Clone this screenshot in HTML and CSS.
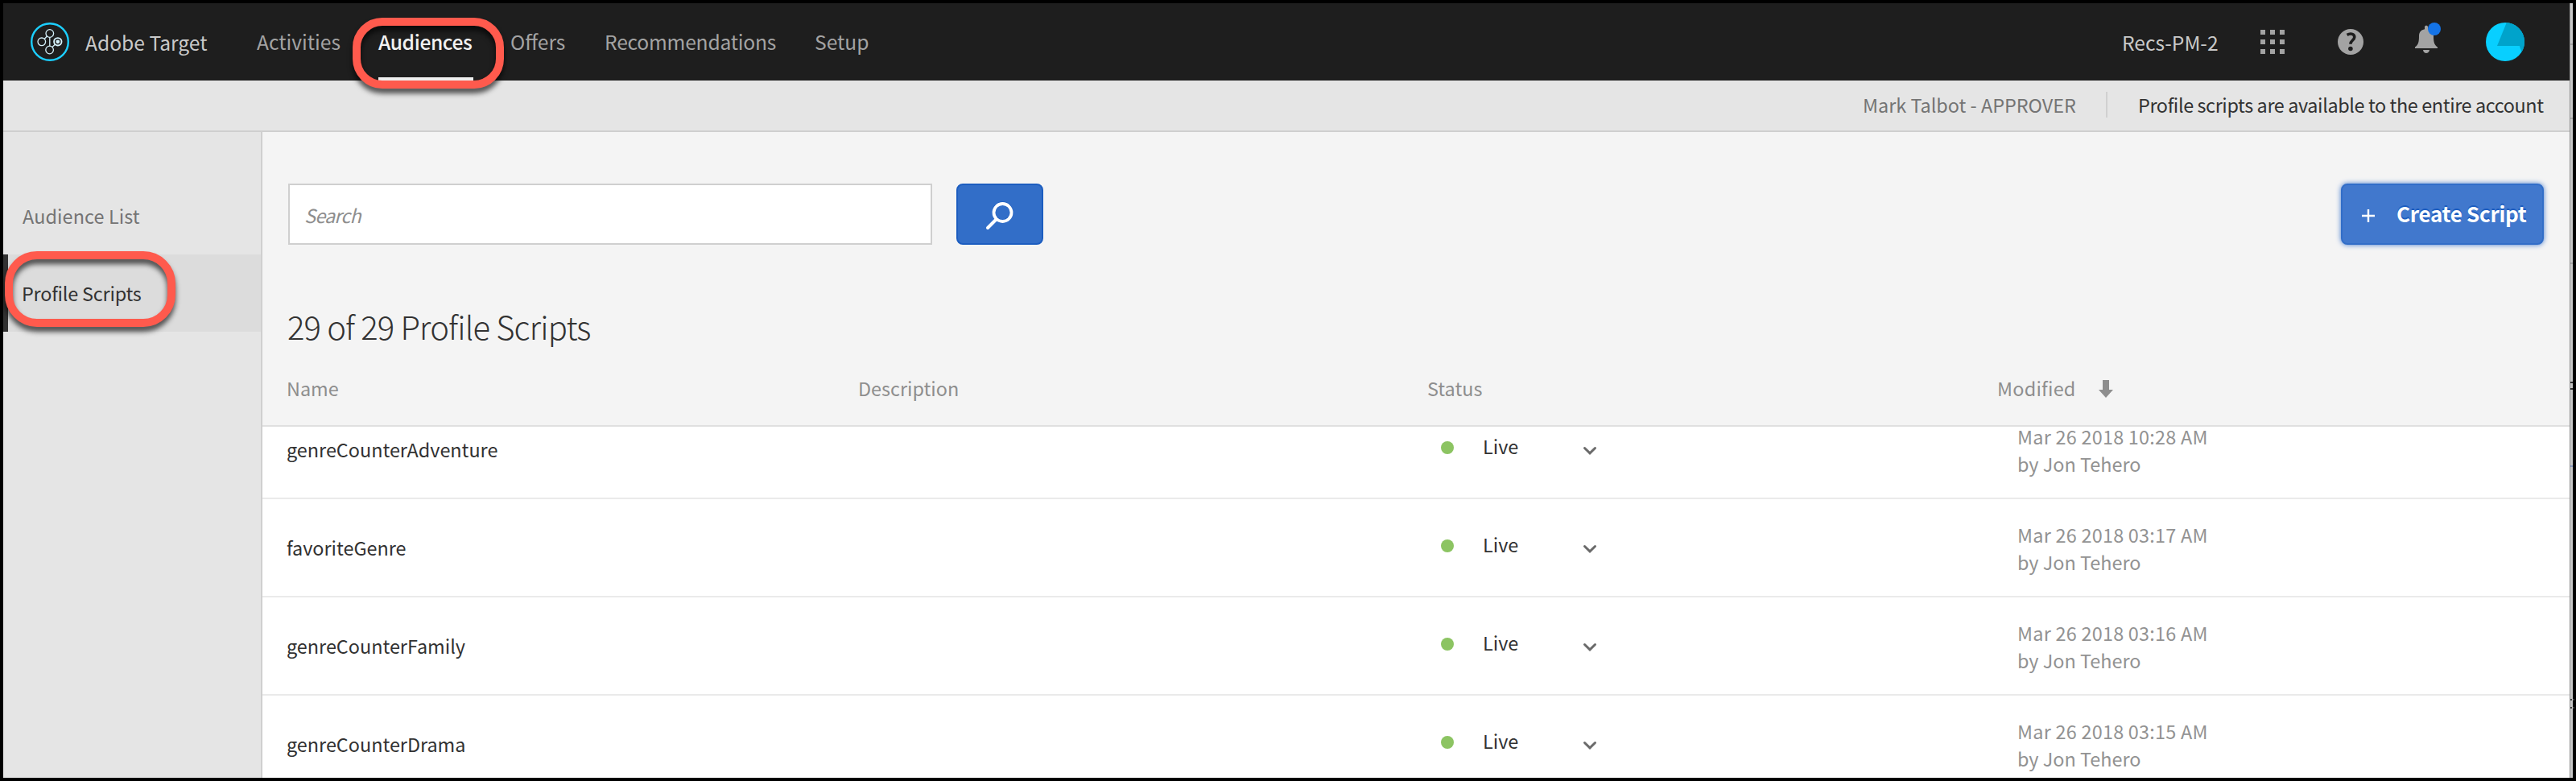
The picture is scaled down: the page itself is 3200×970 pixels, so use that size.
FILE: index.html
```html
<!DOCTYPE html>
<html lang="en">
<head>
<meta charset="utf-8">
<title>Adobe Target</title>
<link rel="stylesheet" href="styles.css">
</head>
<body>
<div class="window">
  <header class="topbar">
    <svg class="logo" viewBox="0 0 48 48" fill="none"><circle cx="24" cy="24" r="22.8" stroke="#1ccfff" stroke-width="2.4"/><g stroke="#d5f1fa" stroke-width="1.3"><circle cx="23.8" cy="13.5" r="4.8"/><circle cx="13.8" cy="23.8" r="4.8"/><circle cx="23.6" cy="34" r="4.8"/><circle cx="33.8" cy="23.8" r="4.7" stroke-width="1.9"/><path d="M17.100 20.500l3.500-3.700M26.900 30.500l3.700-3.400M23.800 18.200v11"/></g><circle cx="33.8" cy="23.8" r="2.4" fill="#d5f1fa"/></svg>
    <span class="brand">Adobe Target</span>
    <nav class="nav">
      <a class="tab activities">Activities</a>
      <a class="tab audiences">Audiences</a>
      <a class="tab offers">Offers</a>
      <a class="tab recs">Recommendations</a>
      <a class="tab setup">Setup</a>
    </nav>
    <div class="tools">
      <span class="org">Recs-PM-2</span>
      <svg class="apps" viewBox="0 0 30 30" fill="#a3a3a3"><path d="M0 0h6v6H0zM12 0h6v6h-6zM24 0h6v6h-6zM0 12h6v6H0zM12 12h6v6h-6zM24 12h6v6h-6zM0 24h6v6H0zM12 24h6v6h-6zM24 24h6v6h-6z"/></svg>
      <svg class="help" viewBox="0 0 32 32" fill="none"><circle cx="16" cy="16" r="16" fill="#a3a3a3"/><path d="M11.600 7.400c5-2.800 9.200-.8 9.200 2.600 0 4-4.900 4.100-4.900 8.700" stroke="#1e1e1e" stroke-width="3.600"/><circle cx="15.900" cy="24.500" r="2.800" fill="#1e1e1e"/></svg>
      <svg class="bell" viewBox="0 0 34 40"><path d="M12 5.500C12 3.200 16 3.200 16 5.500v2.700c4.500.8 7 3.800 7 8.500 0 7.500 1 11 5 13.800V32H0v-1.500c4-2.800 5-6.300 5-13.800 0-4.700 2.500-7.700 7-8.500zM10 34h8c-.5 5.300-7.500 5.300-8 0z" fill="#a3a3a3"/><circle cx="24" cy="8" r="8" fill="#1473e6"/></svg>
      <svg class="avatar" viewBox="0 0 48 48"><circle cx="24" cy="24" r="24" fill="#08cfff"/><path d="M25.800.1A24 24 0 0 1 44.500 36.500L41.800 29H14z" fill="#00a3cb"/></svg>
    </div>
  </header>
  <div class="infobar">
    <span class="user">Mark Talbot - APPROVER</span>
    <span class="note">Profile scripts are available to the entire account</span>
  </div>
  <div class="body">
    <aside class="side">
      <a class="side-item list">Audience List</a>
      <a class="side-item active">Profile Scripts</a>
    </aside>
    <main class="main">
      <div class="actions">
        <div class="search">Search</div>
        <div class="search-btn"><svg viewBox="0 0 36 36" fill="none" stroke-linecap="round"><g stroke="#1c5dc0" stroke-width="3.600"><circle cx="21.500" cy="13" r="11"/></g><g stroke="#fff"><circle cx="21.500" cy="14" r="11" stroke-width="3.800"/><path d="M13.500 22.500L3 33" stroke-width="4"/></g></svg></div>
        <div class="create"><svg viewBox="0 0 16 16"><path d="M8 0v16M0 8h16" stroke="#fff" stroke-width="2.400"/></svg><span>Create Script</span></div>
      </div>
      <h1 class="title">29 of 29 Profile Scripts</h1>
      <div class="cols head">
        <span>Name</span><span>Description</span><span>Status</span>
        <span class="sort">Modified<svg viewBox="0 0 18 22"><path d="M5 0h8v12h5l-9 10-9-10h5z" fill="#8e8e8e"/></svg></span>
      </div>
      <div class="rows">
        <div class="cols row first"><span class="name">genreCounterAdventure</span><span></span><span class="status"><i class="dot"></i><b>Live</b><svg viewBox="0 0 16 10"><path d="M1.500 1.500L8 7.800l6.500-6.300"/></svg></span><span class="date"><span class="when">Mar 26 2018 10:28 AM</span><br>by Jon Tehero</span></div>
        <div class="cols row"><span class="name">favoriteGenre</span><span></span><span class="status"><i class="dot"></i><b>Live</b><svg viewBox="0 0 16 10"><path d="M1.500 1.500L8 7.800l6.500-6.300"/></svg></span><span class="date"><span class="when">Mar 26 2018 03:17 AM</span><br>by Jon Tehero</span></div>
        <div class="cols row"><span class="name">genreCounterFamily</span><span></span><span class="status"><i class="dot"></i><b>Live</b><svg viewBox="0 0 16 10"><path d="M1.500 1.500L8 7.800l6.500-6.300"/></svg></span><span class="date"><span class="when">Mar 26 2018 03:16 AM</span><br>by Jon Tehero</span></div>
        <div class="cols row"><span class="name">genreCounterDrama</span><span></span><span class="status"><i class="dot"></i><b>Live</b><svg viewBox="0 0 16 10"><path d="M1.500 1.500L8 7.800l6.500-6.300"/></svg></span><span class="date"><span class="when">Mar 26 2018 03:15 AM</span><br>by Jon Tehero</span></div>
      </div>
    </main>
  </div>
</div>
<div class="edge"><i class="tick t1"></i><i class="tick t2"></i><i class="tick t3"></i><i class="mark m1"></i><i class="tick blue"></i><i class="mark m2"></i></div>
<div class="callout c1"></div>
<div class="callout c2"></div>
</body>
</html>
```
FILE: styles.css
```css
* { box-sizing: border-box; }
body {
  margin: 0;
  width: 3200px;
  height: 970px;
  padding: 4px;
  background: #000;
  display: flex;
  overflow: hidden;
  position: relative;
  font-family: "Noto Sans CJK SC", "Noto Sans", sans-serif;
  font-size: 23.4px;
  line-height: 34px;
  color: #323232;
}
svg { display: block; overflow: visible; flex: none; }
.window { width: 3188px; height: 962px; overflow: hidden; background: #f4f4f4; display: flex; flex-direction: column; }

.topbar { height: 96px; flex: none; background: #1e1e1e; display: flex; align-items: center; padding-left: 34px; font-size: 24.6px; line-height: 94px; color: #c9c9c9; }
.logo { width: 48px; height: 48px; }
.brand { width: 213px; margin-left: 20px; }
.nav { display: grid; grid-template-columns: 151px 164px 117px 261px 100px; color: #a3a3a3; height: 96px; }
.tab { white-space: nowrap; justify-self: start; }
.recs { letter-spacing: -.2px; }
.audiences { color: #f2f2f2; font-weight: 500; letter-spacing: -.4px; border-bottom: 4px solid #f0f0f0; height: 96px; width: 118px; }
.tools { margin-left: auto; display: flex; align-items: center; padding-right: 56px; }
.org { width: 172px; }
.apps { width: 30px; height: 30px; margin-right: 66px; }
.help { width: 32px; height: 32px; margin-right: 64px; }
.bell { width: 34px; height: 40px; margin: -8px 54px 0 0; }
.avatar { width: 48px; height: 48px; }

.infobar { height: 64px; flex: none; background: #e5e5e5; border-bottom: 2px solid #cfcfcf; display: flex; align-items: center; justify-content: flex-end; padding: 0 32px 2px 0; line-height: 32px; }
.user { color: #747474; width: 304px; border-right: 2px solid #d0d0d0; white-space: nowrap; }
.note { width: 504px; margin-left: 38px; white-space: nowrap; letter-spacing: -.39px; }

.body { flex: 1; display: flex; min-height: 0; }
.side { width: 322px; background: #e5e5e5; border-right: 2px solid #cfcfcf; padding-top: 56px; }
.side-item { display: block; height: 96px; line-height: 96px; padding-left: 24px; color: #747474; }
.list { letter-spacing: .1px; }
.active { color: #323232; background: #dcdcdc; border-left: 6px solid #323232; padding-left: 17px; letter-spacing: -.2px; }

.main { flex: 1; display: flex; flex-direction: column; min-width: 0; }
.actions { display: flex; padding: 64px 32px 0; height: 140px; }
.search { width: 800px; height: 76px; border: 2px solid #cfcfcf; background: #fff; line-height: 74px; padding-left: 18px; letter-spacing: -.8px; font-style: italic; color: #8e8e8e; }
.search-btn { width: 108px; height: 76px; margin-left: 30px; background: #326ec8; border: 2px solid #1c5dc0; border-radius: 8px; display: flex; align-items: center; justify-content: center; }
.search-btn svg { width: 36px; height: 36px; margin-top: 4px; }
.create { width: 252px; height: 76px; margin-left: auto; background: #4178cd; border: 2px solid #326ec8; border-radius: 8px; box-shadow: 0 0 6px #4178cd; display: flex; align-items: center; padding-left: 24px; color: #fff; font-weight: 700; font-size: 26px; letter-spacing: -.3px; text-shadow: 0 -2px #1c5dc0; white-space: nowrap; }
.create span { margin-top: -2px; }
.create svg { width: 16px; height: 16px; margin: 3px 27px 0 0; }
.title { margin: 71px 0 0 31px; font-weight: 300; font-size: 40px; line-height: 60px; letter-spacing: -.82px; white-space: nowrap; }
.cols { display: grid; grid-template-columns: 710px 707px 708px 1fr; padding-left: 30px; }
.head { height: 95px; border-bottom: 2px solid #e0e0e0; color: #8e8e8e; line-height: 34px; padding-top: 30px; }
.sort { display: flex; letter-spacing: .25px; }
.sort svg { width: 18px; height: 22px; margin: 7px 0 0 28px; }
.rows { flex: 1; background: #fff; overflow: hidden; min-height: 0; }
.row { height: 122px; border-bottom: 2px solid #eaeaea; }
.first { margin-top: -32px; }
.name { padding-top: 43px; }
.status { display: flex; padding: 39px 0 0 17px; }
.status b { font-weight: 400; width: 125px; margin-left: 36px; }
.status svg { width: 16px; height: 10px; margin-top: 18px; fill: none; stroke: #6a6a6a; stroke-width: 3; stroke-linecap: round; }
.dot { width: 16px; height: 16px; border-radius: 50%; background: #8cc462; margin-top: 11px; }
.date { padding: 27px 0 0 25px; color: #929292; white-space: nowrap; }
.when { letter-spacing: .25px; }

.edge { width: 4px; height: 962px; background: #c8c8c8; border-left: 1px solid #929292; display: flex; flex-direction: column; }
.tick { height: 2px; background: #a8a8a8; }
.t1 { margin-top: 50px; }
.t2 { margin-top: 90px; }
.t3 { margin-top: 178px; }
.m1 { height: 10px; margin-top: 146px; border: solid #333; border-width: 2px 0; }
.blue { margin-top: 94px; background: #8b9cc4; }
.m2 { height: 12px; margin-top: 288px; border: dotted #444; border-width: 2px 0; }

.callout { position: absolute; border: 10px solid #ff5a4d; filter: drop-shadow(0 6px 3px rgba(0, 0, 0, .65)); }
.c1 { left: 438px; top: 22px; width: 188px; height: 88px; border-radius: 37px; }
.c2 { left: 6px; top: 312px; width: 212px; height: 94px; border-radius: 40px; }
```
